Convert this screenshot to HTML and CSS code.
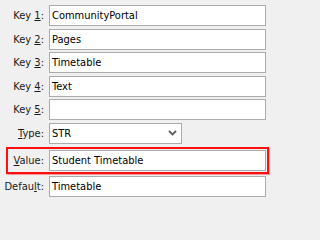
FILE: index.html
```html
<!DOCTYPE html>
<html>
<head>
<meta charset="utf-8">
<link rel="stylesheet" href="styles.css">
</head>
<body>
<form class="form">
  <div class="row"><label class="lbl">Key <u>1</u>:</label><div class="field">CommunityPortal</div></div>
  <div class="row"><label class="lbl">Key <u>2</u>:</label><div class="field">Pages</div></div>
  <div class="row"><label class="lbl">Key <u>3</u>:</label><div class="field">Timetable</div></div>
  <div class="row"><label class="lbl">Key <u>4</u>:</label><div class="field">Text</div></div>
  <div class="row"><label class="lbl">Key <u>5</u>:</label><div class="field"></div></div>
  <div class="row"><label class="lbl"><u>T</u>ype:</label>
    <div class="field select"><span>STR</span>
      <svg class="chev" width="9" height="6" viewBox="0 0 9 6"><path d="M1 1 L4.5 4.5 L8 1" fill="none" stroke="#606060" stroke-width="1.8"/></svg>
    </div>
  </div>
  <div class="row hl"><label class="lbl"><u>V</u>alue:</label><div class="field">Student Timetable</div></div>
  <div class="row"><label class="lbl">Defau<u>l</u>t:</label><div class="field">Timetable</div></div>
</form>
</body>
</html>
```
FILE: styles.css
```css
html, body {
  margin: 0;
  padding: 0;
  background: #f0f0f0;
}
body {
  width: 271px;
  height: 202px;
  overflow: hidden;
  font-family: "DejaVu Sans Condensed", "DejaVu Sans", sans-serif;
  font-size: 11px;
  color: #000;
}
.form {
  display: flex;
  flex-direction: column;
  gap: 2.5px;
  padding-top: 5px;
}
.row {
  display: grid;
  grid-template-columns: 44px 217px;
  column-gap: 5px;
  align-items: center;
}
.lbl {
  text-align: right;
  white-space: nowrap;
  color: #1a1a1a;
}
.lbl u {
  text-underline-offset: 1px;
}
.field {
  box-sizing: border-box;
  height: 21px;
  border: 1px solid #ababab;
  background: #fff;
  padding: 0 2px;
  line-height: 19px;
  white-space: nowrap;
  overflow: hidden;
}
.select {
  width: 133px;
  display: flex;
  align-items: center;
  justify-content: space-between;
  padding-right: 4px;
}
.chev {
  display: block;
}
.hl {
  margin: 0.5px 0 0 6px;
  width: 263px;
  box-sizing: border-box;
  border: 2px solid #ff1010;
  box-shadow: 0 0 1px 0.5px rgba(255, 60, 60, 0.5);
  padding: 1px;
  grid-template-columns: 35px 217px;
}
```
